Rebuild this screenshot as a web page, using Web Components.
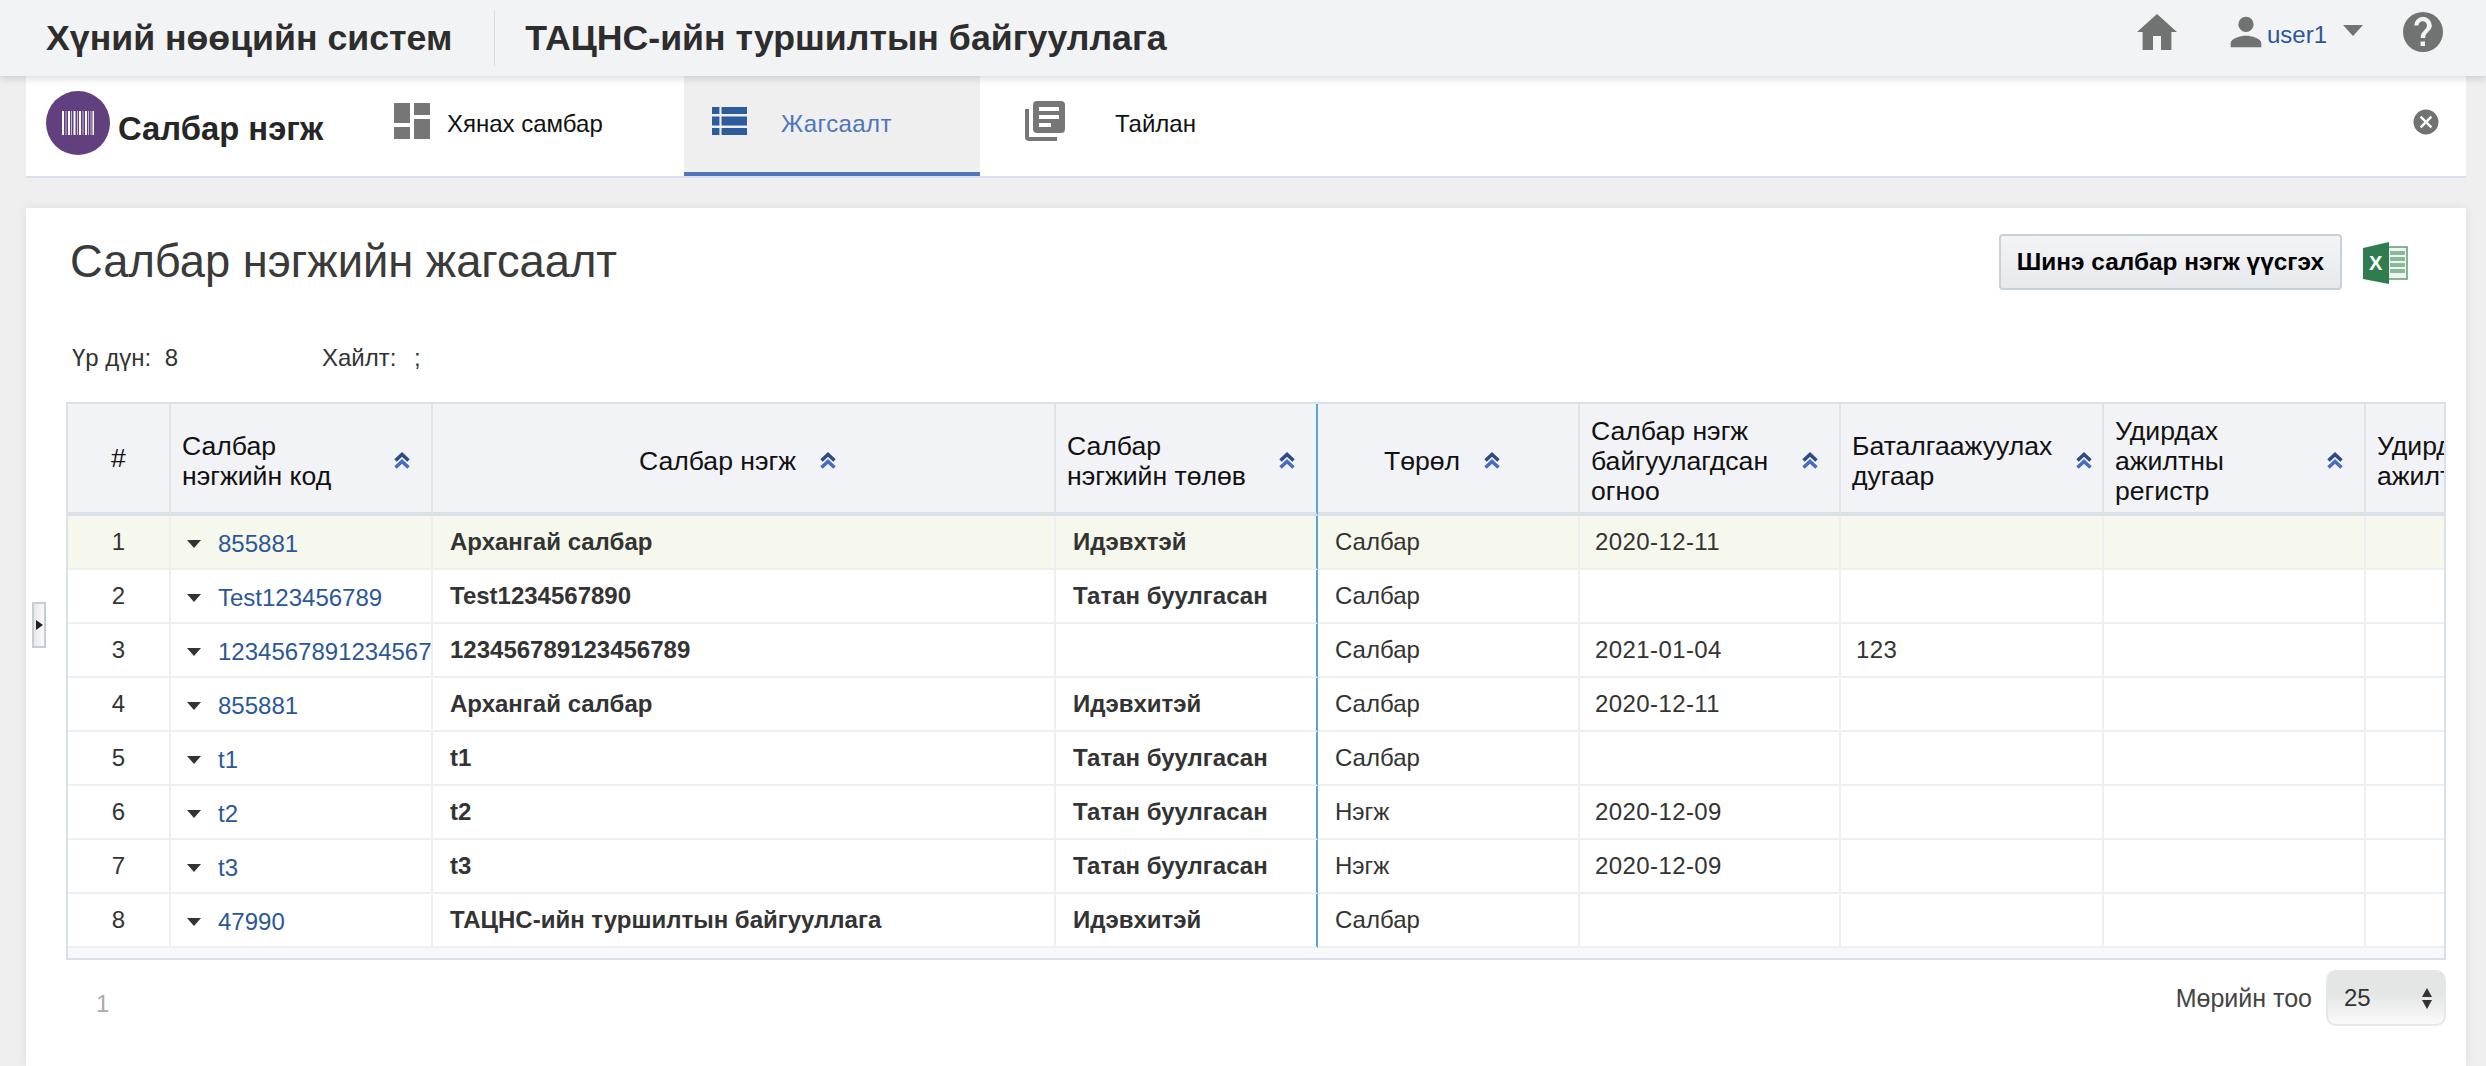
<!DOCTYPE html>
<html lang="mn">
<head>
<meta charset="utf-8">
<title>Салбар нэгж</title>
<style>
  html, body { margin: 0; height: 100%; }
  body {
    background: #efefef;
    font-family: "Liberation Sans", Arial, sans-serif;
    color: #333;
    overflow: hidden;
    display: flex;
    flex-direction: column;
    height: 1066px;
  }
</style>
</head>
<body>
<top-bar></top-bar>
<module-nav></module-nav>
<page-card>
  <page-head></page-head>
  <result-info></result-info>
  <branch-table></branch-table>
  <table-footer></table-footer>
</page-card>
<script>
(function () {
  // material style icons, all on a 24 grid
  const icons = {
    home: '<path d="M10 21v-7h4v7h5.2v-9H22L12 3 2 12h2.8v9z"/>',
    person: '<path d="M12 12a4.6 4.6 0 1 0 0-9.2A4.6 4.6 0 0 0 12 12zm0 2.3c-3.1 0-9.2 1.5-9.2 4.6v2.3h18.4v-2.3c0-3.1-6.1-4.6-9.2-4.6z"/>',
    help: '<path fill-rule="evenodd" d="M12 2a10 10 0 1 0 0 20 10 10 0 0 0 0-20zm1 17h-2.2v-2.2H13zm2.2-7.7-.9.9c-.8.8-1.2 1.4-1.2 2.8h-2.2v-.5c0-1.1.4-2.1 1.2-2.8l1.3-1.4c.4-.4.6-.9.6-1.5a2.1 2.1 0 0 0-4.3 0H7.6a4.4 4.4 0 0 1 8.8 0c0 1-.5 1.8-1.2 2.5z"/>',
    cancel: '<path fill-rule="evenodd" d="M12 2a10 10 0 1 0 0 20 10 10 0 0 0 0-20zm5 13.6L15.6 17 12 13.4 8.4 17 7 15.6l3.6-3.6L7 8.4 8.4 7l3.6 3.6L15.6 7 17 8.4 13.4 12z"/>',
    list: '<path d="M0 0h7v7H0zM9 0h24v7H9zM0 9.5h7v9H0zM9 9.5h24v9H9zM0 21h7v7H0zM9 21h24v7H9z"/>',
    report: '<path fill-rule="evenodd" d="M4 6H2v14a2 2 0 0 0 2 2h14v-2H4zm16-4H8a2 2 0 0 0-2 2v12a2 2 0 0 0 2 2h12a2 2 0 0 0 2-2V4a2 2 0 0 0-2-2zm-1 9H9V9h10zm-4 4H9v-2h6zm4-8H9V5h10z"/>'
  };

  function svg(name, w, h, color) {
    return `<svg width="${w}" height="${h}" viewBox="0 0 24 24" fill="${color}" aria-hidden="true">${icons[name]}</svg>`;
  }

  class TopBar extends HTMLElement {
    constructor() {
      super();
      this.attachShadow({ mode: "open" });
      this.shadowRoot.innerHTML = `
      <style>
        :host {
          display: flex;
          align-items: center;
          height: 76px;
          flex: none;
          background: #f2f3f5;
          box-shadow: 0 2px 8px rgba(0,0,0,.16);
          position: relative;
          z-index: 2;
          box-sizing: border-box;
          padding-left: 46px;
        }
        .title { font-size: 35.700px; font-weight: bold; color: #2d2d2d; white-space: nowrap; }
        .sep { width: 1px; height: 56px; background: #dcdde0; margin: 0 30px 0 42px; }
        .right { margin-left: auto; display: flex; align-items: center; padding: 0 39px 12px 0; }
        .right svg { display: block; }
        .user { color: #2b5797; font-size: 24px; margin-left: 1px; position: relative; top: 3px; }
        .caret { width: 0; height: 0; border: 10px solid transparent; border-top: 11px solid #717372; border-bottom: 0; margin: 0 36px 0 16px; position: relative; top: -2px; }
      </style>
      <div class="title">Хүний нөөцийн систем</div>
      <div class="sep"></div>
      <div class="title">ТАЦНС-ийн туршилтын байгууллага</div>
      <div class="right">
        <span style="margin-right:45px">${svg("home", 48, 48, "#717372")}</span>
        ${svg("person", 40, 40, "#717372")}
        <span class="user">user1</span>
        <span class="caret"></span>
        ${svg("help", 48, 48, "#717372")}
      </div>`;
    }
  }

  class NavTab extends HTMLElement {
    constructor() {
      super();
      this.attachShadow({ mode: "open" });
      this.shadowRoot.innerHTML = `
      <style>
        :host {
          display: flex;
          align-items: center;
          box-sizing: border-box;
          height: 100px;
          font-size: 24px;
          color: #111;
          white-space: nowrap;
          padding-bottom: 4px;
        }
        :host([active]) { background: #efefef; color: #4f75ba; border-bottom: 4px solid #4f75ba; padding-bottom: 0; letter-spacing: .4px; }
        ::slotted(svg) { display: block; flex: none; margin-top: -6px; }
      </style>
      <slot name="icon"></slot><span><slot></slot></span>`;
    }
  }

  class ModuleNav extends HTMLElement {
    constructor() {
      super();
      this.attachShadow({ mode: "open" });
      this.shadowRoot.innerHTML = `
      <style>
        :host {
          display: flex;
          flex: none;
          height: 102px;
          margin: 0 20px 0 26px;
          background: #fff;
          border-bottom: 2px solid #d9dfe6;
          box-sizing: border-box;
          position: relative;
        }
        .logo { width: 64px; height: 64px; border-radius: 50%; background: #623f7f; display: flex; align-items: center; justify-content: center; margin: 15px 8px 0 20px; flex: none; }
        .brand { font-size: 32.800px; font-weight: bold; color: #262626; margin-top: 34px; white-space: nowrap; width: 276px; }
        .close { margin-left: auto; margin-right: 25px; align-self: center; display: block; position: relative; top: -2px; }
        nav-tab { flex: none; }
        .t1 { width: 290px; }
        .t2 { width: 296px; }
        .t3 { width: 300px; }
      </style>
      <div class="logo">
        <svg width="32" height="24" viewBox="0 0 32 32" preserveAspectRatio="none" fill="#fff">
          <path d="M0 0h2v32H0zM6 0h2v32H6zM11.500 0h2v32h-2zM17 0h2v32h-2zM23 0h2v32h-2zM30.500 0h1.500v32h-1.500z"/>
          <path opacity=".65" d="M3.500 0h1v32h-1zM9 0h1v32H9zM15 0h1v32h-1zM20.500 0h1v32h-1zM26 0h1v32h-1zM28.500 0h1v32h-1z"/>
        </svg>
      </div>
      <div class="brand">Салбар нэгж</div>
      <nav-tab class="t1">
        <svg slot="icon" width="40" height="40" viewBox="0 0 40 40" fill="#767676" style="margin-right:15px;margin-left:-2px"><path d="M2 2h16v20H2zM22 2h16v12H22zM22 18h16v20H22zM2 26h16v12H2z"/></svg>
        Хянах самбар
      </nav-tab>
      <nav-tab class="t2" active>
        <svg slot="icon" width="35" height="28" viewBox="0 0 33 28" preserveAspectRatio="none" fill="#2c5c9c" style="margin-left:28px;margin-right:34px">${icons.list}</svg>
        Жагсаалт
      </nav-tab>
      <nav-tab class="t3">
        <svg slot="icon" width="48" height="48" viewBox="0 0 24 24" fill="#767676" style="margin-left:41px;margin-right:46px">${icons.report}</svg>
        Тайлан
      </nav-tab>
      <span class="close">${svg("cancel", 30, 30, "#717372")}</span>`;
    }
  }

  class PageCard extends HTMLElement {
    constructor() {
      super();
      this.attachShadow({ mode: "open" });
      this.shadowRoot.innerHTML = `
      <style>
        :host {
          display: block;
          flex: 1;
          margin: 30px 20px 0 26px;
          background: #fff;
          padding: 26px 20px 0 40px;
          box-shadow: 0 0 10px rgba(0,0,0,.08);
          position: relative;
        }
        .toggle {
          position: absolute;
          left: 6px;
          top: 394px;
          width: 14px;
          height: 46px;
          box-sizing: border-box;
          border: 2px solid #c5ced8;
          background: linear-gradient(90deg, #e6e8ec, #fbfbfc);
          display: flex;
          align-items: center;
          justify-content: center;
        }
        .toggle i { width: 0; height: 0; border: 5px solid transparent; border-left: 7px solid #222; border-right: 0; }
      </style>
      <div class="toggle"><i></i></div>
      <slot></slot>`;
    }
  }

  class PageHead extends HTMLElement {
    constructor() {
      super();
      this.attachShadow({ mode: "open" });
      this.shadowRoot.innerHTML = `
      <style>
        :host { display: flex; align-items: center; height: 56px; padding-left: 4px; }
        h1 { margin: 0; font-size: 45.300px; font-weight: normal; color: #3a3a3a; white-space: nowrap; }
        button {
          margin-left: auto;
          height: 56px;
          width: 343px;
          padding: 0;
          font: bold 24.400px "Liberation Sans", Arial, sans-serif;
          color: #000;
          border: 2px solid #c8d0da;
          border-radius: 4px;
          background: linear-gradient(#f3f4f6, #e6e9ed);
        }
        svg { display: block; margin: 0 38px 0 21px; position: relative; top: 1px; }
      </style>
      <h1>Салбар нэгжийн жагсаалт</h1>
      <button>Шинэ салбар нэгж үүсгэх</button>
      <svg width="45" height="42" viewBox="0 0 45 42">
        <path d="M16 5h28v32H16z" fill="#eef4f0" stroke="#5f9c78" stroke-width="1.500"/>
        <path d="M27 9h15v4H27zM27 15h15v4H27zM27 21h15v4H27zM27 27h15v4H27z" fill="#8ab89b"/>
        <path d="M0 6 26 0v42L0 37z" fill="#2f7d4f"/>
        <text x="6" y="28" font-family="Liberation Sans, sans-serif" font-weight="bold" font-size="20" fill="#fff">X</text>
      </svg>`;
    }
  }

  class ResultInfo extends HTMLElement {
    constructor() {
      super();
      this.attachShadow({ mode: "open" });
      this.shadowRoot.innerHTML = `
      <style>
        :host { display: flex; height: 40px; margin-top: 48px; margin-bottom: 24px; padding-left: 6px; align-items: center; font-size: 24px; color: #333; }
        .a { width: 250px; }
        .b { width: 92px; }
      </style>
      <span class="a">Үр дүн:&nbsp; 8</span><span class="b">Хайлт:</span><span>;</span>`;
    }
  }

  const headers = [
    { w: 103, label: "#", align: "center", sort: false },
    { w: 262, label: "Салбар<br>нэгжийн код" },
    { w: 623, label: "Салбар нэгж", align: "center" },
    { w: 262, label: "Салбар<br>нэгжийн төлөв" },
    { w: 262, label: "Төрөл", align: "center" },
    { w: 261, label: "Салбар нэгж<br>байгуулагдсан<br>огноо" },
    { w: 263, label: "Баталгаажуулах<br>дугаар", tight: true },
    { w: 262, label: "Удирдах<br>ажилтны<br>регистр" },
    { w: 262, label: "Удирдах<br>ажилтны нэр" }
  ];

  const rows = [
    ["855881", "Архангай салбар", "Идэвхтэй", "Салбар", "2020-12-11", ""],
    ["Test123456789", "Test1234567890", "Татан буулгасан", "Салбар", "", ""],
    ["1234567891234567", "123456789123456789", "", "Салбар", "2021-01-04", "123"],
    ["855881", "Архангай салбар", "Идэвхитэй", "Салбар", "2020-12-11", ""],
    ["t1", "t1", "Татан буулгасан", "Салбар", "", ""],
    ["t2", "t2", "Татан буулгасан", "Нэгж", "2020-12-09", ""],
    ["t3", "t3", "Татан буулгасан", "Нэгж", "2020-12-09", ""],
    ["47990", "ТАЦНС-ийн туршилтын байгууллага", "Идэвхитэй", "Салбар", "", ""]
  ];

  const sortIcon = `<svg class="sort" width="16" height="18" viewBox="0 0 16 18" fill="none" stroke-width="3.500">
    <path d="M1.500 8.500 8 2.500l6.500 6" stroke="#2c4a86"/><path d="M1.500 15.500 8 9.500l6.500 6" stroke="#4a6cc0"/></svg>`;

  class BranchTable extends HTMLElement {
    constructor() {
      super();
      this.attachShadow({ mode: "open" });
      const cols = headers.map(h => `<col style="width:${h.w}px">`).join("");
      const head = headers.map((h, i) => {
        const inner = `<span class="lbl">${h.label}</span>` + (h.sort === false ? "" : sortIcon);
        const cls = ["hc", h.align === "center" ? "center" : "", h.tight ? "tight" : "", h.sort === false ? "plain" : ""].join(" ");
        return `<th class="${i === 3 ? "freeze" : ""}"><div class="${cls}">${inner}</div></th>`;
      }).join("");
      const body = rows.map((r, i) => `
        <tr class="${i === 0 ? "hi" : ""}">
          <td class="num">${i + 1}</td>
          <td class="code"><div><i></i><a>${r[0]}</a></div></td>
          <td class="b">${r[1]}</td>
          <td class="b freeze">${r[2]}</td>
          <td class="t">${r[3]}</td>
          <td class="t d">${r[4]}</td>
          <td class="t d">${r[5]}</td>
          <td></td><td></td>
        </tr>`).join("");
      this.shadowRoot.innerHTML = `
      <style>
        :host {
          display: block;
          width: 2380px;
          box-sizing: border-box;
          overflow: hidden;
          border: 2px solid #d9e0e6;
        }
        table { table-layout: fixed; border-collapse: separate; border-spacing: 0; width: 2460px; }
        th {
          height: 108px;
          padding: 0;
          background: #f1f3f7;
          border-right: 2px solid #e0e4e9;
          border-bottom: 4px solid #d9e0e6;
          box-sizing: content-box;
          font-weight: normal;
          font-size: 26.600px;
          line-height: 30px;
          color: #111;
          text-align: left;
        }
        .hc { display: flex; align-items: center; padding: 6px 21px 0 11px; white-space: nowrap; overflow: hidden; }
        .hc.tight { padding-right: 10px; }
        .hc.center { justify-content: center; gap: 24px; padding-right: 23px; }
        .hc.plain { padding: 0; }
        .hc:not(.center) .lbl { flex: 1; }
        .sort { flex: none; }
        td {
          height: 52px;
          padding: 0;
          font-size: 24px;
          color: #333;
          border-right: 2px solid #eeeff1;
          border-bottom: 2px solid #eeeff1;
          white-space: nowrap;
          overflow: hidden;
        }
        th.freeze, td.freeze { border-right: 2px solid #58a6d0; }
        tr.hi td { background: #f7f8ed; }
        .num { text-align: center; }
        .code div { display: flex; align-items: center; padding: 3px 0 0 16px; }
        .code i { width: 0; height: 0; border: 7px solid transparent; border-top: 8px solid #333; border-bottom: 0; margin-right: 17px; flex: none; }
        .code a { color: #2b5797; font-size: 24px; }
        .b { font-weight: bold; padding-left: 17px; }
        .t { padding-left: 17px; }
        .t.d { padding-left: 15px; letter-spacing: .4px; }
        .foot { height: 10px; background: #f6f8fb; }
      </style>
      <table>
        <colgroup>${cols}</colgroup>
        <thead><tr>${head}</tr></thead>
        <tbody>${body}</tbody>
      </table>
      <div class="foot"></div>`;
    }
  }

  class TableFooter extends HTMLElement {
    constructor() {
      super();
      this.attachShadow({ mode: "open" });
      this.shadowRoot.innerHTML = `
      <style>
        :host { display: flex; align-items: center; height: 56px; margin-top: 10px; padding-left: 30px; width: 2350px; font-size: 24px; }
        .page { color: #aaa; position: relative; top: 6px; }
        .label { margin-left: auto; color: #444; margin-right: 14px; font-size: 25px; }
        .select {
          width: 120px;
          height: 56px;
          box-sizing: border-box;
          border: 2px solid #e4e7eb;
          border-radius: 10px;
          background: linear-gradient(#e4e5e5 40%, #fafafa);
          display: flex;
          align-items: center;
          padding: 0 12px 0 16px;
          color: #333;
        }
        .arrows { margin-left: auto; display: grid; gap: 3px; }
        .arrows i { width: 0; height: 0; border: 5.500px solid transparent; }
        .up { border-bottom: 9px solid #333 !important; border-top: 0 !important; }
        .dn { border-top: 9px solid #333 !important; border-bottom: 0 !important; }
      </style>
      <span class="page">1</span>
      <span class="label">Мөрийн тоо</span>
      <div class="select"><span>25</span><span class="arrows"><i class="up"></i><i class="dn"></i></span></div>`;
    }
  }

  customElements.define("top-bar", TopBar);
  customElements.define("nav-tab", NavTab);
  customElements.define("module-nav", ModuleNav);
  customElements.define("page-card", PageCard);
  customElements.define("page-head", PageHead);
  customElements.define("result-info", ResultInfo);
  customElements.define("branch-table", BranchTable);
  customElements.define("table-footer", TableFooter);
})();
</script>
</body>
</html>
